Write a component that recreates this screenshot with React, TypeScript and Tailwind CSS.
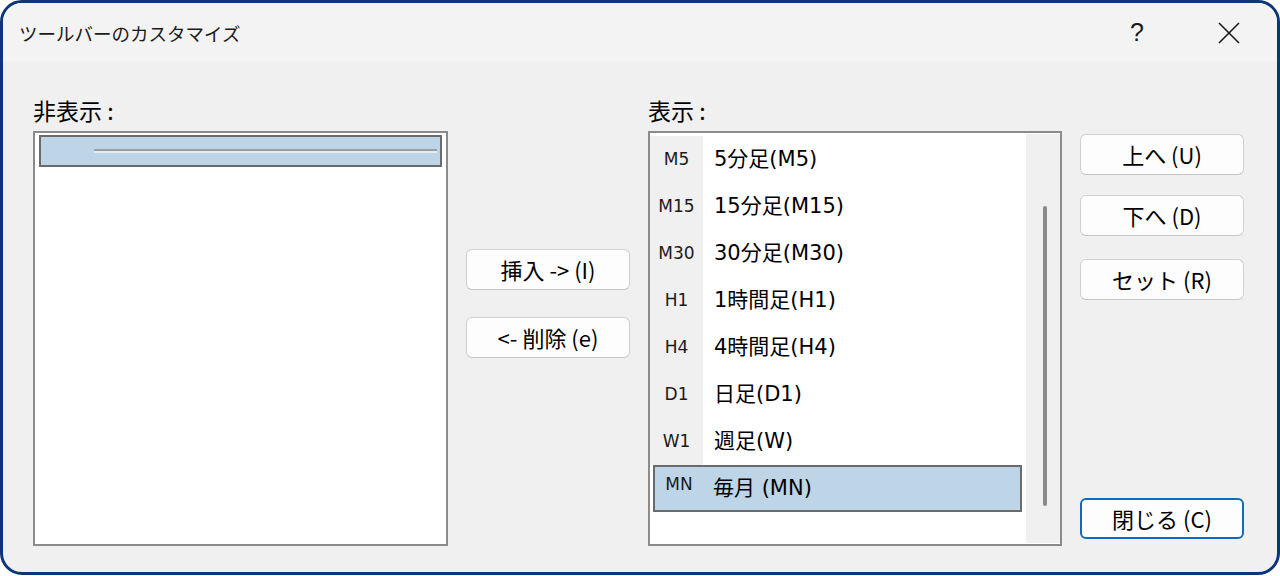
import React from "react";

const jp = { fontFamily: '"Noto Sans CJK JP", "Noto Sans", sans-serif' };
const mix = { fontFamily: '"DejaVu Sans", "Noto Sans CJK JP", sans-serif' };

function Btn({ children, primary }: { children: React.ReactNode; primary?: boolean }) {
  return (
    <div
      className={
        "h-[41px] w-[164px] rounded-[6px] bg-[#fdfdfd] flex items-center justify-center text-[22px] text-black " +
        (primary ? "border-2 border-[#0f6cbd]" : "border border-[#d0d0d0] border-b-[#c4c4c4]")
      }
      style={jp}
    >
      {children}
    </div>
  );
}

const rows = [
  ["M5", "5分足(M5)"],
  ["M15", "15分足(M15)"],
  ["M30", "30分足(M30)"],
  ["H1", "1時間足(H1)"],
  ["H4", "4時間足(H4)"],
  ["D1", "日足(D1)"],
  ["W1", "週足(W)"],
];

export default function App() {
  return (
    <div className="w-[1280px] h-[576px] bg-white">
      <div className="w-[1280px] h-[575px] rounded-[22px] border-[3px] border-[#0b367a] bg-[#f0f0f0] overflow-hidden flex flex-col">
        {/* title bar */}
        <div className="h-[59px] bg-[#f3f3f3] flex items-center shrink-0">
          <div className="pl-[16px] pt-[2px] text-[18.5px] text-[#1a1a1a] flex-1" style={jp}>
            ツールバーのカスタマイズ
          </div>
          <div className="w-[40px] text-center text-[25px] text-[#1a1a1a] mr-[61px]" style={{ fontFamily: '"Liberation Sans", sans-serif' }}>
            ?
          </div>
          <svg width="22" height="22" viewBox="0 0 22 22" className="mr-[37px]">
            <path d="M1 1 L21 21 M21 1 L1 21" stroke="#1a1a1a" strokeWidth="1.6" fill="none" />
          </svg>
        </div>
        {/* body */}
        <div className="flex pl-[30px]">
          {/* left column */}
          <div className="w-[415px] flex flex-col pt-[34px]">
            <div className="h-[28px] leading-[28px] text-[23px] text-black" style={jp}>
              非表示 :
            </div>
            <div className="mt-[7px] h-[415px] border-2 border-[#8b8b8b] bg-white pt-[2px] px-[4px]">
              <div className="h-[32px] bg-[#bdd5e6] border-2 border-[#6b6b6b] flex items-center pl-[53px] pr-[3px]">
                <div className="flex-1 flex flex-col">
                  <div className="h-[2px] bg-[#9a9ea2]" />
                  <div className="h-[2px] bg-[#e6edf2]" />
                </div>
              </div>
            </div>
          </div>
          {/* middle buttons */}
          <div className="ml-[18px] w-[164px] pt-[187px] flex flex-col gap-[27px]">
            <Btn>挿入 -&gt; (I)</Btn>
            <Btn>&lt;- 削除 (e)</Btn>
          </div>
          {/* right list column */}
          <div className="ml-[18px] w-[414px] flex flex-col pt-[34px]">
            <div className="h-[28px] leading-[28px] text-[23px] text-black" style={jp}>
              表示 :
            </div>
            <div className="mt-[7px] h-[415px] border-2 border-[#8b8b8b] bg-white flex pt-[3px] pb-[1px]">
              <div className="flex-1 flex flex-col">
                {rows.map(([k, v]) => (
                  <div key={k} className="h-[47px] flex items-center">
                    <div
                      className="w-[53px] h-full bg-[#f0f0f0] flex items-center justify-center text-[17px] text-[#1a1a1a]"
                      style={{ fontFamily: '"DejaVu Sans", sans-serif' }}
                    >
                      {k}
                    </div>
                    <div className="pl-[11px] text-[21px] text-black" style={mix}>
                      {v}
                    </div>
                  </div>
                ))}
                <div className="ml-[3px] mr-[4px] h-[47px] bg-[#bdd5e6] border-2 border-[#6b6b6b] flex items-center">
                  <div
                    className="w-[48px] text-center text-[17px] text-[#1a1a1a] -mt-[8px]"
                    style={{ fontFamily: '"DejaVu Sans", sans-serif' }}
                  >
                    MN
                  </div>
                  <div className="pl-[10px] text-[21px] text-black" style={mix}>
                    毎月 (MN)
                  </div>
                </div>
              </div>
              <div className="w-[34px] bg-[#f0f0f0] flex justify-center pt-[72px] -mt-[2px]">
                <div className="w-[4px] h-[300px] rounded-full bg-[#8a8a8a] ml-[3px]" />
              </div>
            </div>
          </div>
          {/* right buttons */}
          <div className="ml-[18px] w-[164px] pt-[72px] flex flex-col">
            <Btn>上へ (U)</Btn>
            <div className="mt-[20px]">
              <Btn>下へ (D)</Btn>
            </div>
            <div className="mt-[23px]">
              <Btn>セット (R)</Btn>
            </div>
            <div className="mt-[198px]">
              <Btn primary>閉じる (C)</Btn>
            </div>
          </div>
        </div>
      </div>
    </div>
  );
}
